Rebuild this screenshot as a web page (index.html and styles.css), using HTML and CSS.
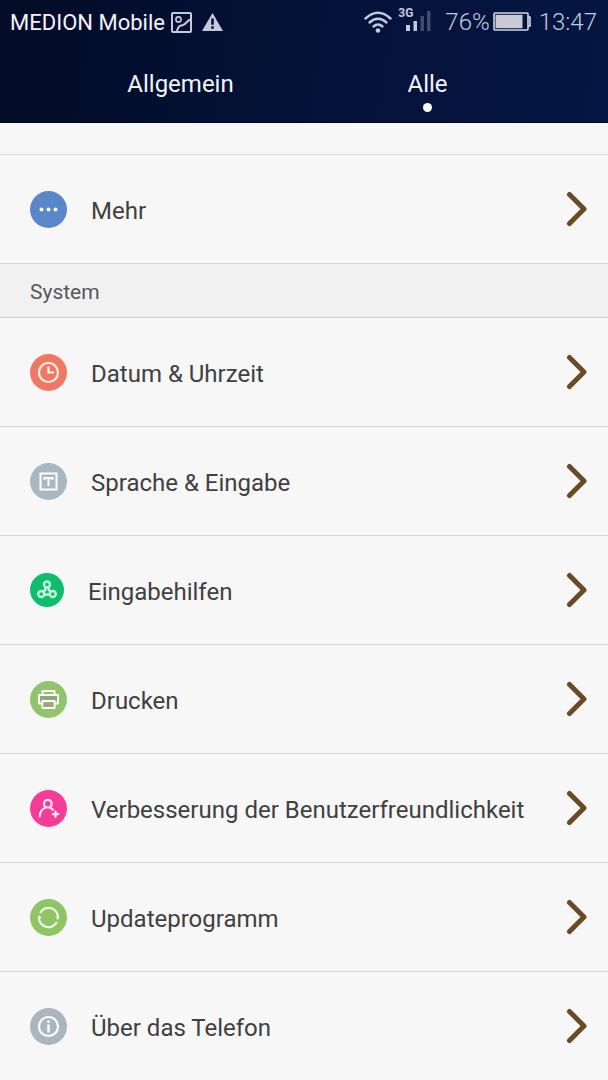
FILE: index.html
```html
<!DOCTYPE html>
<html lang="de">
<head>
<meta charset="utf-8">
<meta name="viewport" content="width=device-width, initial-scale=1">
<title>Einstellungen</title>
<link rel="stylesheet" href="styles.css">
</head>
<body>
<svg class="defs" aria-hidden="true">
  <symbol id="chevron" viewBox="0 0 22 36"><path d="M3.500 3.500 18 18 3.500 32.500" fill="none" stroke="#6a4a26" stroke-width="5" stroke-linecap="round" stroke-linejoin="round"/></symbol>
</svg>
<header class="top">
  <div class="status">
    <span class="carrier">MEDION Mobile</span>
    <svg class="picture" viewBox="0 0 21 21" aria-hidden="true"><g fill="none" stroke="#c5c9de" stroke-width="2"><rect x="1" y="1" width="19" height="19" rx="1"/><circle cx="7.500" cy="7.500" r="2.600" stroke-width="1.600"/><path d="M6 19C7 14 9 14 12 13S16 9 19 7.500"/></g></svg>
    <svg class="warn" viewBox="0 0 21 18" aria-hidden="true"><path d="M10.500 0 21 18H0Z" fill="#c5c9de"/><path d="M9.200 5.500h2.600v6.200H9.200zM9.200 13.200h2.600v2.500H9.200z" fill="#041033"/></svg>
    <span class="spacer"></span>
    <svg class="wifi" viewBox="0 0 28 22" aria-hidden="true"><g fill="none" stroke="#c5c9de" stroke-width="2.400" stroke-linecap="round"><path d="M1.500 7.500Q14-4 26.500 7.500"/><path d="M5.500 11.500Q14 4 22.500 11.500"/><path d="M9.500 15.500Q14 11.500 18.500 15.500"/></g><circle cx="14" cy="19.500" r="2.300" fill="#c5c9de"/></svg>
    <span class="signal"><span class="net">3G</span>
      <svg class="bars" viewBox="0 0 25 20" aria-hidden="true"><path d="M0 14h4v6H0zM7.500 10h3.500v10H7.500z" fill="#c5c9de"/><path d="M14.500 5H18v15h-3.500zM21 0h3.500v20H21z" fill="#414b70"/></svg></span>
    <span class="light">76%</span>
    <svg class="battery" viewBox="0 0 38 19" aria-hidden="true"><rect x="1" y="1" width="34" height="17" rx="1" fill="none" stroke="#d5d7e4" stroke-width="1.600"/><rect x="2.500" y="2.800" width="27" height="13.400" fill="#c9cad8"/><path d="M35 5h2v9h-2" fill="none" stroke="#d5d7e4" stroke-width="1.600"/></svg>
    <span class="light">13:47</span>
  </div>
  <nav class="tabs">
    <button class="tab" type="button">Allgemein</button>
    <button class="tab active" type="button">Alle</button>
  </nav>
</header>
<main>
  <div class="previous"></div>
  <a class="row" href="#mehr"><svg class="icon" viewBox="0 0 37 37" aria-hidden="true"><circle cx="18.500" cy="18.500" r="18.500" fill="#5a86ca"/><g fill="#fff"><circle cx="11.500" cy="18.500" r="2"/><circle cx="18.500" cy="18.500" r="2"/><circle cx="25.500" cy="18.500" r="2"/></g></svg><span class="label">Mehr</span><svg class="chevron" aria-hidden="true"><use href="#chevron"/></svg></a>
  <h2 class="section">System</h2>
  <a class="row" href="#datum"><svg class="icon" viewBox="0 0 37 37" aria-hidden="true"><circle cx="18.500" cy="18.500" r="18.500" fill="#ef7865"/><g fill="none" stroke="#fff0e4" stroke-width="2.200"><circle cx="18.500" cy="18.500" r="9.500"/><path d="M18.500 12.500v6h5.500"/></g></svg><span class="label">Datum &amp; Uhrzeit</span><svg class="chevron" aria-hidden="true"><use href="#chevron"/></svg></a>
  <a class="row" href="#sprache"><svg class="icon" viewBox="0 0 37 37" aria-hidden="true"><circle cx="18.500" cy="18.500" r="18.500" fill="#a9b7c2"/><g fill="none" stroke="#fff" stroke-width="2"><rect x="10.500" y="10.500" width="16" height="16"/><path d="M14.500 17v-2h8v2M18.500 15v8"/></g></svg><span class="label">Sprache &amp; Eingabe</span><svg class="chevron" aria-hidden="true"><use href="#chevron"/></svg></a>
  <a class="row compact" href="#eingabehilfen"><svg class="icon" viewBox="0 0 34 34" aria-hidden="true"><circle cx="17" cy="17" r="17" fill="#0fbd6c"/><g fill="none" stroke="#c5f8df" stroke-width="2.300"><circle cx="17" cy="11.500" r="3"/><circle cx="11.200" cy="21" r="3"/><circle cx="22.800" cy="21" r="3"/><path d="M15.300 14.200V17l-2.300 1.400M18.700 14.200V17l2.300 1.400M14.200 21.500h5.600"/></g></svg><span class="label">Eingabehilfen</span><svg class="chevron" aria-hidden="true"><use href="#chevron"/></svg></a>
  <a class="row" href="#drucken"><svg class="icon" viewBox="0 0 37 37" aria-hidden="true"><circle cx="18.500" cy="18.500" r="18.500" fill="#91c46b"/><g fill="none" stroke="#fff" stroke-width="2" stroke-linejoin="round"><path d="M12.500 14V10h12v4M12.500 22.500H9V14h19v8.500h-3.500"/><path d="M12.500 20h12v7h-12z"/></g><path d="M10 15h17v4H10z" fill="#8aa878"/><path d="M13.500 21.500h10V26h-10z" fill="#9da779"/></svg><span class="label">Drucken</span><svg class="chevron" aria-hidden="true"><use href="#chevron"/></svg></a>
  <a class="row" href="#verbesserung"><svg class="icon" viewBox="0 0 37 37" aria-hidden="true"><circle cx="18.500" cy="18.500" r="18.500" fill="#f53d98"/><g fill="none" stroke="#ffe3f2" stroke-width="2.200" stroke-linecap="round"><circle cx="17.800" cy="13.700" r="3.800"/><path d="M15.500 17.500C12 19 9.800 22 9.800 26.500M20 17.500l2.800 2M25.500 21.500v5.500M22.800 24.200h5.500"/></g></svg><span class="label">Verbesserung der Benutzerfreundlichkeit</span><svg class="chevron" aria-hidden="true"><use href="#chevron"/></svg></a>
  <a class="row" href="#update"><svg class="icon" viewBox="0 0 37 37" aria-hidden="true"><circle cx="18.500" cy="18.500" r="18.500" fill="#8fc565"/><g fill="none" stroke="#f4fbe9" stroke-width="2.200"><path d="M10.200 14A9.400 9.400 0 0 1 27.900 19.500M26.800 23A9.400 9.400 0 0 1 9.100 17.500"/></g><path d="m25.500 18 4-.3-1.600 3.300zM11.500 19l-4 .3 1.600-3.300z" fill="#f4fbe9"/></svg><span class="label">Updateprogramm</span><svg class="chevron" aria-hidden="true"><use href="#chevron"/></svg></a>
  <a class="row" href="#telefon"><svg class="icon" viewBox="0 0 37 37" aria-hidden="true"><circle cx="18.500" cy="18.500" r="18.500" fill="#a9b6c0"/><circle cx="18.500" cy="18.500" r="9.500" fill="none" stroke="#fff" stroke-width="2.200"/><path d="M17.300 12.500h2.400v2.400h-2.400zM17.300 16.500h2.400v8h-2.400z" fill="#fff"/></svg><span class="label">Über das Telefon</span><svg class="chevron" aria-hidden="true"><use href="#chevron"/></svg></a>
</main>
</body>
</html>
```
FILE: styles.css
```css
* { box-sizing: border-box; }

body {
  margin: 0;
  overflow-x: hidden;
  background: #f7f7f7;
  color: #404040;
  font-family: Roboto, "Liberation Sans", sans-serif;
  font-size: 24px;
}

.defs { display: none; }

.top {
  background: linear-gradient(100deg, #030c26 0%, #041238 50%, #041643 100%);
  border-bottom: 1px solid #01061c;
  color: #f2f4fb;
}

.status {
  display: flex;
  align-items: center;
  height: 44px;
  padding: 0 11px 0 10px;
  font-size: 22px;
}

.spacer { flex: 1; }
.light { color: #c5c9de; font-size: 24px; font-weight: 300; }
.picture { width: 21px; height: 21px; margin-left: 6px; }
.warn { width: 21px; height: 18px; margin-left: 10px; }
.wifi { width: 28px; height: 22px; }

.signal {
  display: flex;
  align-items: flex-start;
  margin: 0 14px 0 6px;
  padding-bottom: 6px;
}

.net {
  margin-right: -7px;
  color: #c5c9de;
  font-size: 12px;
  font-weight: 700;
  line-height: 12px;
}

.bars { width: 25px; height: 20px; margin-top: 4px; }
.battery { width: 38px; height: 19px; margin: 0 8px 2px 3px; }

.tabs {
  display: grid;
  grid-template-columns: 1fr 1fr;
  padding: 0 57px;
}

.tab {
  position: relative;
  height: 78px;
  padding: 2px 0 0;
  border: 0;
  background: none;
  color: inherit;
  font: inherit;
}

.active::after {
  content: "";
  position: absolute;
  bottom: 10px;
  left: 50%;
  width: 9px;
  height: 9px;
  margin-left: -5px;
  border-radius: 50%;
  background: #fff;
}

.previous { height: 32px; border-bottom: 1px solid #dcdcdc; }

.row {
  display: flex;
  align-items: center;
  height: 109px;
  padding: 0 20px 0 30px;
  border-bottom: 1px solid #d4d4d4;
  color: inherit;
  text-decoration: none;
}

.row:last-child { border-bottom-color: transparent; }
.icon { flex: none; width: 37px; height: 37px; margin-right: 24px; }
.compact .icon { width: 34px; height: 34px; }
.label { flex: 1; padding-top: 3px; }
.chevron { flex: none; width: 22px; height: 36px; }

.section {
  display: flex;
  align-items: center;
  height: 54px;
  margin: 0;
  padding: 2px 30px 0;
  border-bottom: 1px solid #d0d0d0;
  background: #f1f1f1;
  color: #585858;
  font-size: 21px;
  font-weight: 400;
}
```
